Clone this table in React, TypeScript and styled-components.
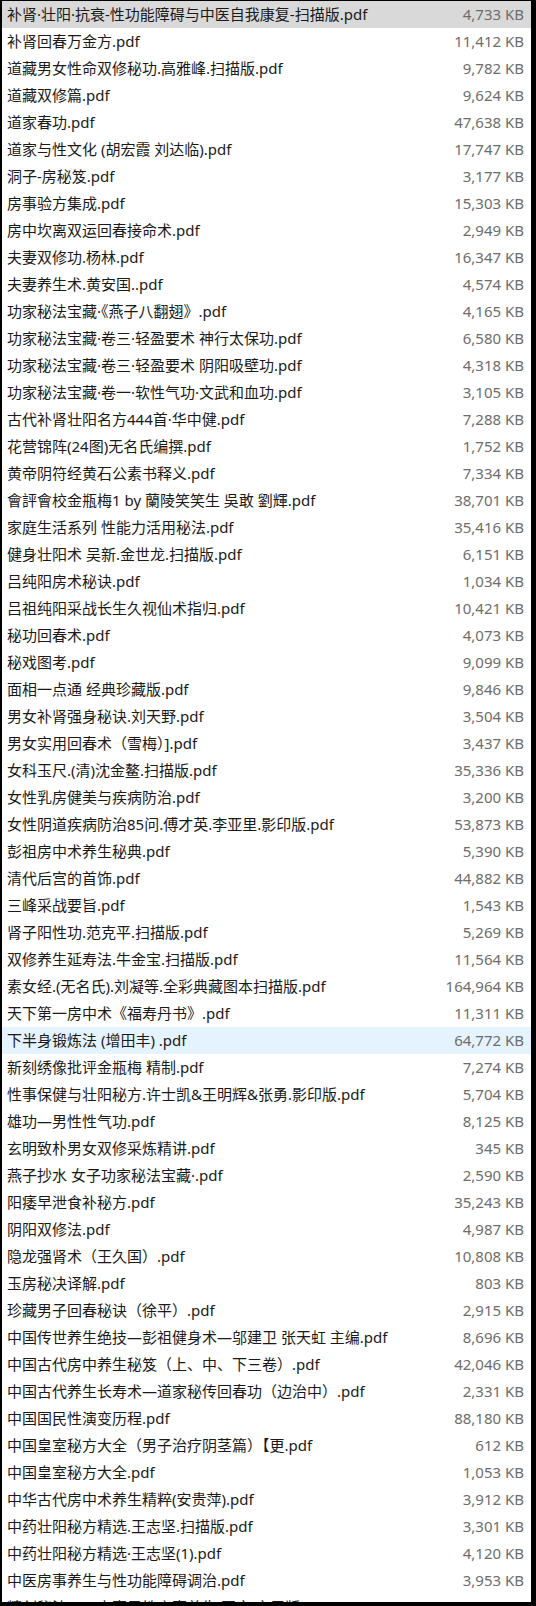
import React from "react";
import styled, { createGlobalStyle } from "styled-components";

const Global = createGlobalStyle`
  html, body { margin: 0; padding: 0; background: #000; }
  body { font-family: "Noto Sans", "Noto Sans CJK SC", sans-serif; }
`;

type Item = { name: string; size: string; state?: "selected" | "hover" };

const items: Item[] = [
  { name: "补肾·壮阳·抗衰-性功能障碍与中医自我康复-扫描版.pdf", size: "4,733 KB", state: "selected" },
  { name: "补肾回春万金方.pdf", size: "11,412 KB" },
  { name: "道藏男女性命双修秘功.高雅峰.扫描版.pdf", size: "9,782 KB" },
  { name: "道藏双修篇.pdf", size: "9,624 KB" },
  { name: "道家春功.pdf", size: "47,638 KB" },
  { name: "道家与性文化 (胡宏霞  刘达临).pdf", size: "17,747 KB" },
  { name: "洞子-房秘笈.pdf", size: "3,177 KB" },
  { name: "房事验方集成.pdf", size: "15,303 KB" },
  { name: "房中坎离双运回春接命术.pdf", size: "2,949 KB" },
  { name: "夫妻双修功.杨林.pdf", size: "16,347 KB" },
  { name: "夫妻养生术.黄安国..pdf", size: "4,574 KB" },
  { name: "功家秘法宝藏·《燕子八翻翅》.pdf", size: "4,165 KB" },
  { name: "功家秘法宝藏·卷三·轻盈要术  神行太保功.pdf", size: "6,580 KB" },
  { name: "功家秘法宝藏·卷三·轻盈要术  阴阳吸壁功.pdf", size: "4,318 KB" },
  { name: "功家秘法宝藏·卷一·软性气功·文武和血功.pdf", size: "3,105 KB" },
  { name: "古代补肾壮阳名方444首·华中健.pdf", size: "7,288 KB" },
  { name: "花营锦阵(24图)无名氏编撰.pdf", size: "1,752 KB" },
  { name: "黄帝阴符经黄石公素书释义.pdf", size: "7,334 KB" },
  { name: "會評會校金瓶梅1 by 蘭陵笑笑生 吳敢 劉輝.pdf", size: "38,701 KB" },
  { name: "家庭生活系列  性能力活用秘法.pdf", size: "35,416 KB" },
  { name: "健身壮阳术 吴新.金世龙.扫描版.pdf", size: "6,151 KB" },
  { name: "吕纯阳房术秘诀.pdf", size: "1,034 KB" },
  { name: "吕祖纯阳采战长生久视仙术指归.pdf", size: "10,421 KB" },
  { name: "秘功回春术.pdf", size: "4,073 KB" },
  { name: "秘戏图考.pdf", size: "9,099 KB" },
  { name: "面相一点通  经典珍藏版.pdf", size: "9,846 KB" },
  { name: "男女补肾强身秘诀.刘天野.pdf", size: "3,504 KB" },
  { name: "男女实用回春术（雪梅）].pdf", size: "3,437 KB" },
  { name: "女科玉尺.(清)沈金鳌.扫描版.pdf", size: "35,336 KB" },
  { name: "女性乳房健美与疾病防治.pdf", size: "3,200 KB" },
  { name: "女性阴道疾病防治85问.傅才英.李亚里.影印版.pdf", size: "53,873 KB" },
  { name: "彭祖房中术养生秘典.pdf", size: "5,390 KB" },
  { name: "清代后宫的首饰.pdf", size: "44,882 KB" },
  { name: "三峰采战要旨.pdf", size: "1,543 KB" },
  { name: "肾子阳性功.范克平.扫描版.pdf", size: "5,269 KB" },
  { name: "双修养生延寿法.牛金宝.扫描版.pdf", size: "11,564 KB" },
  { name: "素女经.(无名氏).刘凝等.全彩典藏图本扫描版.pdf", size: "164,964 KB" },
  { name: "天下第一房中术《福寿丹书》.pdf", size: "11,311 KB" },
  { name: "下半身锻炼法 (增田丰) .pdf", size: "64,772 KB", state: "hover" },
  { name: "新刻绣像批评金瓶梅 精制.pdf", size: "7,274 KB" },
  { name: "性事保健与壮阳秘方.许士凯&王明辉&张勇.影印版.pdf", size: "5,704 KB" },
  { name: "雄功—男性性气功.pdf", size: "8,125 KB" },
  { name: "玄明致朴男女双修采炼精讲.pdf", size: "345 KB" },
  { name: "燕子抄水 女子功家秘法宝藏·.pdf", size: "2,590 KB" },
  { name: "阳痿早泄食补秘方.pdf", size: "35,243 KB" },
  { name: "阴阳双修法.pdf", size: "4,987 KB" },
  { name: "隐龙强肾术（王久国）.pdf", size: "10,808 KB" },
  { name: "玉房秘决译解.pdf", size: "803 KB" },
  { name: "珍藏男子回春秘诀（徐平）.pdf", size: "2,915 KB" },
  { name: "中国传世养生绝技—彭祖健身术—邬建卫 张天虹 主编.pdf", size: "8,696 KB" },
  { name: "中国古代房中养生秘笈（上、中、下三卷）.pdf", size: "42,046 KB" },
  { name: "中国古代养生长寿术—道家秘传回春功（边治中）.pdf", size: "2,331 KB" },
  { name: "中国国民性演变历程.pdf", size: "88,180 KB" },
  { name: "中国皇室秘方大全（男子治疗阴茎篇）【更.pdf", size: "612 KB" },
  { name: "中国皇室秘方大全.pdf", size: "1,053 KB" },
  { name: "中华古代房中术养生精粹(安贵萍).pdf", size: "3,912 KB" },
  { name: "中药壮阳秘方精选.王志坚.扫描版.pdf", size: "3,301 KB" },
  { name: "中药壮阳秘方精选·王志坚(1).pdf", size: "4,120 KB" },
  { name: "中医房事养生与性功能障碍调治.pdf", size: "3,953 KB" },
  { name: "精创秘法——夫妻男性房事养生 图文·实用版.pdf", size: "16,648 KB" },
];

const Frame = styled.div`
  height: 1606px;
  box-sizing: border-box;
  padding: 1px 5px 4px 2px;
  background: #000;
  overflow: hidden;
`;

const List = styled.div`
  height: 100%;
  background: #fff;
  overflow: hidden;
  display: flex;
  flex-direction: column;
`;

const Row = styled.div<{ $state?: "selected" | "hover" }>`
  flex: 0 0 27px;
  height: 27px;
  display: grid;
  grid-template-columns: 1fr auto;
  align-items: center;
  padding: 0 7px 0 5px;
  font-size: 15px;
  line-height: 27px;
  white-space: nowrap;
  background: ${(p) =>
    p.$state === "selected" ? "#d9d9d9" : p.$state === "hover" ? "#e5f3ff" : "#fff"};
`;

const Name = styled.span`
  color: #1a1a1a;
  overflow: hidden;
`;

const Size = styled.span`
  color: #6d6d6d;
  text-align: right;
`;

export default function App() {
  return (
    <>
      <Global />
      <Frame>
        <List>
          {items.map((it, i) => (
            <Row key={i} $state={it.state}>
              <Name>{it.name}</Name>
              <Size>{it.size}</Size>
            </Row>
          ))}
        </List>
      </Frame>
    </>
  );
}
